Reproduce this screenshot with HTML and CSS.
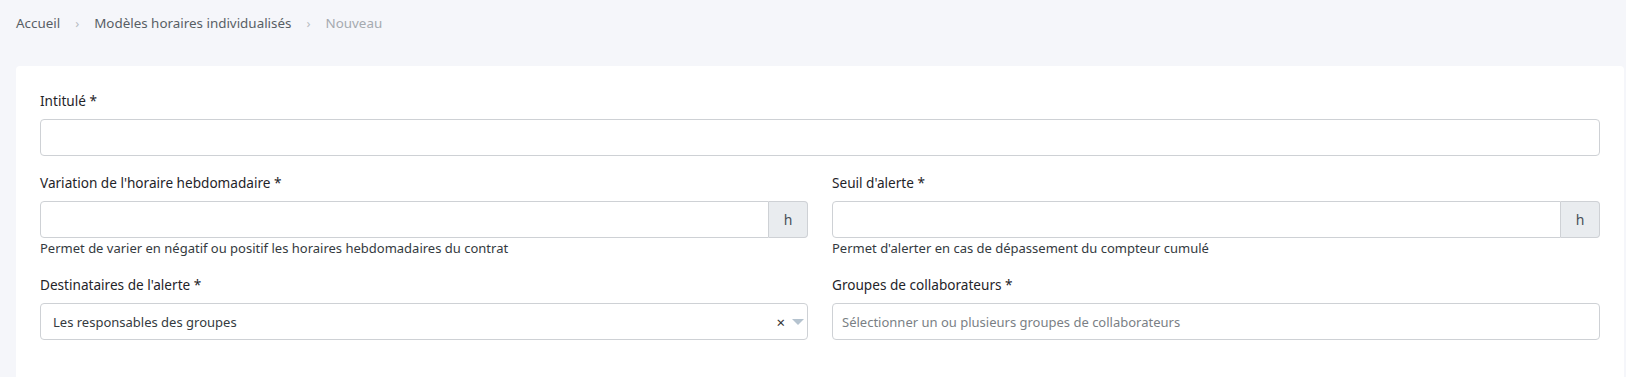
FILE: index.html
```html
<!DOCTYPE html>
<html lang="fr">
<head>
    <meta charset="UTF-8">
    <meta name="viewport" content="width=device-width, initial-scale=1.0">
    <title>Nouveau modèle horaire</title>
    <link rel="stylesheet" href="styles.css">
</head>
<body>

<nav class="breadcrumb">
    <a href="#">Accueil</a>
    <span class="sep">›</span>
    <a href="#">Modèles horaires individualisés</a>
    <span class="sep">›</span>
    <span class="current">Nouveau</span>
</nav>

<div class="card">
    <div class="form-group">
        <label for="intitule">Intitulé *</label>
        <input type="text" id="intitule" class="form-control">
    </div>

    <div class="row">
        <div class="form-group">
            <label for="variation">Variation de l'horaire hebdomadaire *</label>
            <div class="input-group">
                <input type="text" id="variation" class="form-control">
                <span class="addon">h</span>
            </div>
            <small class="help">Permet de varier en négatif ou positif les horaires hebdomadaires du contrat</small>
        </div>
        <div class="form-group">
            <label for="seuil">Seuil d'alerte *</label>
            <div class="input-group">
                <input type="text" id="seuil" class="form-control">
                <span class="addon">h</span>
            </div>
            <small class="help">Permet d'alerter en cas de dépassement du compteur cumulé</small>
        </div>
    </div>

    <div class="row">
        <div class="form-group">
            <label>Destinataires de l'alerte *</label>
            <div class="select">
                <span class="select-value">Les responsables des groupes</span>
                <span class="select-clear">×</span>
                <span class="select-arrow"></span>
            </div>
        </div>
        <div class="form-group">
            <label>Groupes de collaborateurs *</label>
            <div class="select select-multi">
                <span class="placeholder">Sélectionner un ou plusieurs groupes de collaborateurs</span>
            </div>
        </div>
    </div>
</div>

</body>
</html>
```

FILE: styles.css
```css
body {
    font-family: "Noto Sans", "Open Sans", sans-serif;
    font-size: 14px;
    margin: 0;
    padding: 0;
    background-color: #f5f6fa;
    color: #212529;
}
.breadcrumb {
    display: flex;
    align-items: center;
    gap: 15px;
    padding: 12px 16px;
    height: 22px;
    margin-bottom: 20px;
    font-size: 13.4px;
}
.breadcrumb a {
    color: #585e65;
    text-decoration: none;
}
.breadcrumb .sep {
    color: #b8bcc2;
    font-size: 13px;
}
.breadcrumb .current {
    color: #a5aab0;
}
.card {
    background: white;
    margin: 0 2px 0 16px;
    padding: 24px 24px 40px;
    border-radius: 4px;
}
.form-group {
    margin-bottom: 16px;
}
.form-group label {
    display: block;
    line-height: 21px;
    margin-bottom: 8px;
    color: #1f2429;
    font-size: 13.6px;
}
.form-control {
    display: block;
    box-sizing: border-box;
    width: 100%;
    height: 37px;
    border: 1px solid #ced1d5;
    border-radius: 4px;
    padding: 6px 12px;
    font: inherit;
    background: white;
}
.row {
    display: grid;
    grid-template-columns: 1fr 1fr;
    column-gap: 24px;
}
.input-group {
    display: flex;
}
.input-group .form-control {
    border-radius: 4px 0 0 4px;
    flex: 1;
}
.addon {
    display: flex;
    align-items: center;
    justify-content: center;
    box-sizing: border-box;
    width: 39px;
    height: 37px;
    background: #e9ecef;
    border: 1px solid #ced1d5;
    border-left: none;
    border-radius: 0 4px 4px 0;
    color: #495057;
}
.help {
    display: block;
    font-size: 13px;
    line-height: 20px;
    color: #343a40;
}
.select {
    display: flex;
    align-items: center;
    box-sizing: border-box;
    height: 37px;
    border: 1px solid #ced1d5;
    border-radius: 4px;
    padding: 0 3px 0 12px;
    font-size: 13px;
}
.select-value {
    flex: 1;
    color: #343a40;
}
.select-clear {
    color: #333;
    font-size: 15px;
    margin-right: 7px;
}
.select-arrow {
    width: 0;
    height: 0;
    border-left: 6px solid transparent;
    border-right: 6px solid transparent;
    border-top: 6px solid #b5c3cf;
}
.select-multi {
    padding-left: 9px;
}
.placeholder {
    color: #7a7f85;
}
```
